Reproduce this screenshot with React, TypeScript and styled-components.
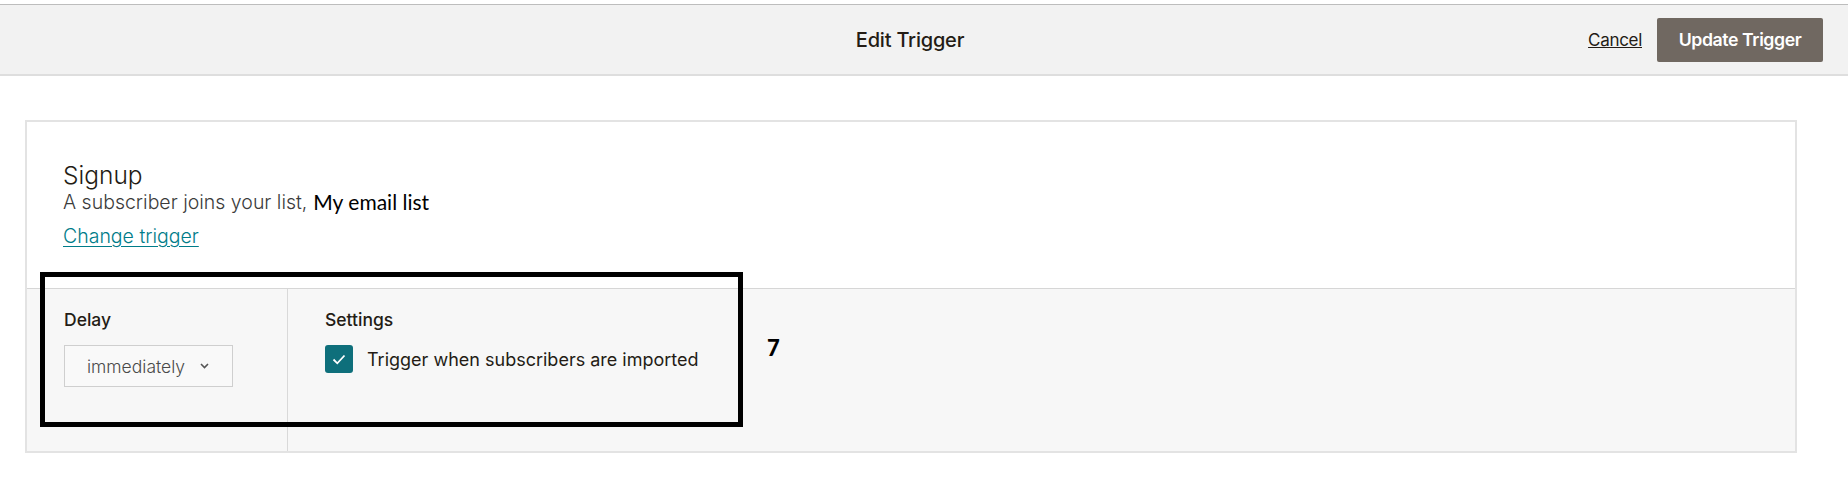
import React from "react";
import styled, { createGlobalStyle } from "styled-components";

const Global = createGlobalStyle`
  html, body { margin: 0; padding: 0; background: #ffffff; }
  body { font-family: Inter, "Noto Sans", sans-serif; color: #241c15; }
  * { box-sizing: border-box; }
`;

const Page = styled.div`
  width: 1848px;
  height: 488px;
  padding-top: 4px;
  overflow: hidden;
`;

const Header = styled.header`
  height: 72px;
  background: #f2f2f2;
  border-top: 1px solid #bdbdbd;
  border-bottom: 2px solid #dedede;
  display: grid;
  grid-template-columns: 1fr auto 1fr;
  align-items: center;
  padding: 0 25px 0 25px;
`;

const Title = styled.h1`
  margin: 0 28px 0 0;
  font-size: 20px;
  font-weight: 500;
  color: #241c15;
  letter-spacing: -0.2px;
`;

const Actions = styled.div`
  display: flex;
  justify-content: flex-end;
  align-items: center;
  gap: 15px;
`;

const CancelLink = styled.a`
  font-size: 17px;
  color: #241c15;
  text-decoration: underline;
  letter-spacing: -0.3px;
  cursor: pointer;
`;

const PrimaryButton = styled.button`
  width: 166px;
  height: 44px;
  border: none;
  border-radius: 2px;
  background: #706861;
  color: #ffffff;
  font-family: Inter, sans-serif;
  font-size: 17.7px;
  font-weight: 600;
  letter-spacing: -0.4px;
`;

const Main = styled.main`
  padding: 44px 51px 0 25px;
`;

const Card = styled.section`
  position: relative;
  border: 2px solid #e3e3e3;
`;

const Summary = styled.div`
  padding: 40px 36px 0 36px;
  border-bottom: 1px solid #d6d6d6;
  height: 167px;
`;

const TriggerName = styled.h2`
  margin: 0;
  font-size: 24.5px;
  font-weight: 300;
  line-height: 27px;
  color: #241c15;
`;

const Description = styled.p`
  margin: 0;
  font-size: 19.5px;
  font-weight: 300;
  line-height: 26px;
  color: #3b3b3b;
  display: flex;
  gap: 6px;
`;

const ListName = styled.span`
  font-family: Lato, "Open Sans", sans-serif;
  font-weight: 400;
  font-size: 21px;
  color: #000000;
`;

const ChangeLink = styled.a`
  display: inline-block;
  margin-top: 8px;
  font-size: 19.5px;
  font-weight: 300;
  line-height: 26px;
  color: #007c89;
  text-decoration: underline;
  text-underline-offset: 3px;
`;

const Details = styled.div`
  display: grid;
  grid-template-columns: 261px 1fr;
  height: 162px;
  background: #f7f7f7;
`;

const Column = styled.div<{ $divider?: boolean }>`
  padding: 21px 36px 0 37px;
  border-right: ${(p) => (p.$divider ? "1px solid #d9d9d9" : "none")};
  display: flex;
  flex-direction: column;
  align-items: flex-start;
  gap: 15px;
`;

const Label = styled.div`
  font-size: 17.5px;
  font-weight: 500;
  color: #241c15;
  line-height: 20px;
`;

const Select = styled.div`
  width: 169px;
  height: 42px;
  border: 1px solid #cfcfcf;
  background: #f9f9f9;
  display: flex;
  align-items: center;
  gap: 15px;
  padding-left: 22px;
  font-size: 17.5px;
  font-weight: 300;
  color: #4a4a4a;
`;

const CheckRow = styled.label`
  display: flex;
  align-items: center;
  gap: 14px;
  font-size: 18px;
  color: #241c15;
`;

const Box = styled.span`
  width: 28px;
  height: 28px;
  border-radius: 3px;
  background: #0e6f7b;
  display: flex;
  align-items: center;
  justify-content: center;
`;

const Annotation = styled.div`
  position: absolute;
  left: 13px;
  top: 150px;
  width: 703px;
  height: 155px;
  border: 5px solid #000000;
  pointer-events: none;
`;

const Marker = styled.div`
  position: absolute;
  left: 740px;
  top: 212px;
  font-family: Lato, "Open Sans", sans-serif;
  font-weight: 900;
  font-size: 22px;
  color: #000000;
`;

export default function App() {
  return (
    <Page>
      <Global />
      <Header>
        <div />
        <Title>Edit Trigger</Title>
        <Actions>
          <CancelLink>Cancel</CancelLink>
          <PrimaryButton>Update Trigger</PrimaryButton>
        </Actions>
      </Header>
      <Main>
        <Card>
          <Summary>
            <TriggerName>Signup</TriggerName>
            <Description>
              A subscriber joins your list, <ListName>My email list</ListName>
            </Description>
            <ChangeLink>Change trigger</ChangeLink>
          </Summary>
          <Details>
            <Column $divider>
              <Label>Delay</Label>
              <Select>
                immediately
                <svg width="9" height="6" viewBox="0 0 9 6">
                  <path d="M1 1l3.5 3.5L8 1" fill="none" stroke="#555" strokeWidth="1.6" />
                </svg>
              </Select>
            </Column>
            <Column>
              <Label>Settings</Label>
              <CheckRow>
                <Box>
                  <svg width="14" height="11" viewBox="0 0 14 11">
                    <path d="M1.5 5.5l3.8 3.8L12.5 1.5" fill="none" stroke="#fff" strokeWidth="1.8" />
                  </svg>
                </Box>
                Trigger when subscribers are imported
              </CheckRow>
            </Column>
          </Details>
          <Annotation />
          <Marker>7</Marker>
        </Card>
      </Main>
    </Page>
  );
}
